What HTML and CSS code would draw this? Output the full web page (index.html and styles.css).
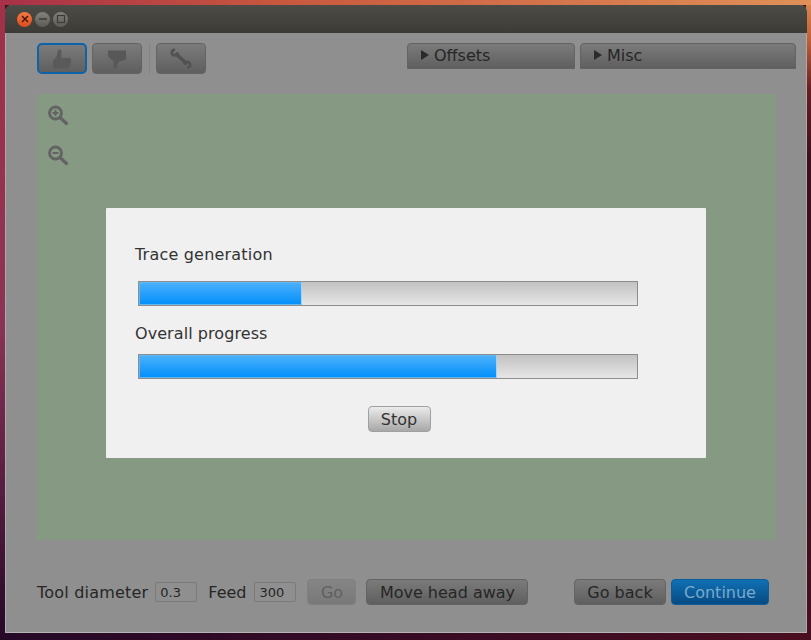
FILE: index.html
```html
<!DOCTYPE html>
<html lang="en">
<head>
  <meta charset="UTF-8">
  <title>Trace generation</title>
  <link rel="stylesheet" href="styles.css">
</head>
<body>

<div class="window">
  <div class="titlebar">
    <span class="wbtn close">
      <svg width="10" height="10" viewBox="0 0 10 10"><path d="M2 2 L8 8 M8 2 L2 8" stroke="#3a1206" stroke-width="1.4"/></svg>
    </span>
    <span class="wbtn">
      <svg width="10" height="10" viewBox="0 0 10 10"><path d="M1 5 H9" stroke="#3a3a36" stroke-width="1.4"/></svg>
    </span>
    <span class="wbtn">
      <svg width="10" height="10" viewBox="0 0 10 10"><rect x="1.5" y="1.5" width="7" height="7" fill="none" stroke="#3a3a36" stroke-width="1.2"/></svg>
    </span>
  </div>

  <div class="content">
    <div class="toolbar">
      <button class="btn tool focused">
        <svg width="22" height="22" viewBox="0 0 22 22"><path fill="#5a5a5a" d="M2 13 Q2 11.5 4 11 L6 7 L7 2 Q10.5 0.5 10.5 4 Q10.5 7 10 10 H18.5 Q20.5 10 20 12 Q20.5 14 19.5 15 Q20 17 18.5 18 Q18.5 20.5 16.5 20.5 H4 Q2 20.5 2 19 Z"/></svg>
      </button>
      <button class="btn tool">
        <svg width="22" height="22" viewBox="0 0 22 22"><path fill="#585858" d="M2 2.5 H20 V11 Q20 12 18 12 L12.5 14 L10.5 20 Q8 21.5 7.5 19 L7.5 13 Q4 11 2 8 Z"/></svg>
      </button>
      <span class="sep"></span>
      <button class="btn tool">
        <svg width="22" height="22" viewBox="0 0 22 22" fill="none" stroke="#525252">
          <path d="M5.5 5.5 L17 16" stroke-width="3.6"/>
          <path d="M5 1.8 A2.8 2.8 0 1 0 7.5 4.6" stroke-width="2.8"/>
          <path d="M17.3 19.6 A2.8 2.8 0 1 0 14.6 16.8" stroke-width="2.8"/>
        </svg>
      </button>
      <div class="spacer"></div>
      <button class="btn pane offsets"><span class="arrow"></span>Offsets</button>
      <button class="btn pane misc"><span class="arrow"></span>Misc</button>
    </div>

    <div class="canvas">
      <svg class="zoom" width="22" height="22" viewBox="0 0 22 22">
        <circle cx="8.5" cy="9" r="6" fill="none" stroke="#636363" stroke-width="2.8"/>
        <path d="M13 13.5 L19.5 19.5" stroke="#636363" stroke-width="3.2" stroke-linecap="round"/>
        <path d="M5.5 9 H11.5 M8.5 6 V12" stroke="#636363" stroke-width="2"/>
      </svg>
      <svg class="zoom" width="22" height="22" viewBox="0 0 22 22">
        <circle cx="8.5" cy="9" r="6" fill="none" stroke="#636363" stroke-width="2.8"/>
        <path d="M13 13.5 L19.5 19.5" stroke="#636363" stroke-width="3.2" stroke-linecap="round"/>
        <path d="M5.5 9 H11.5" stroke="#636363" stroke-width="2"/>
      </svg>
    </div>

    <div class="footer">
      <label class="lbl tool-label">Tool diameter</label>
      <input class="field" type="text" value="0.3">
      <label class="lbl feed">Feed</label>
      <input class="field" type="text" value="300">
      <button class="btn go" disabled>Go</button>
      <button class="btn move">Move head away</button>
      <div class="spacer"></div>
      <button class="btn back">Go back</button>
      <button class="btn continue">Continue</button>
    </div>
  </div>

  <div class="overlay">
    <div class="dialog">
      <div class="task first">Trace generation</div>
      <div class="bar"><div class="fill" style="width: 32.8%"></div></div>
      <div class="task second">Overall progress</div>
      <div class="bar"><div class="fill" style="width: 71.8%"></div></div>
      <button class="stop">Stop</button>
    </div>
  </div>
</div>

</body>
</html>
```

FILE: styles.css
```css
html, body {
  height: 100%;
}

body {
  margin: 0;
  padding: 5px 4px 7px 5px;
  box-sizing: border-box;
  overflow: hidden;
  font-family: "DejaVu Sans", sans-serif;
  background-color: #3e0f1c;
  background-image:
    linear-gradient(90deg, #a83048, #c8583e 35%, #e09058 100%),
    linear-gradient(180deg, #dd8a50 0, #c06038 40px, #6a1c22 90px, #3e0f1c 160px, #3e0f1c 500px, #4a0e20 100%),
    linear-gradient(180deg, #a33048, #8c3355 50%, #5a1f40 75%, #250828 100%),
    linear-gradient(90deg, #250828, #4a0e20);
  background-repeat: no-repeat;
  background-size: 100% 5px, 5px 100%, 5px 100%, 100% 7px;
  background-position: top, right, left, bottom;
}

.window {
  position: relative;
  height: 100%;
  display: flex;
  flex-direction: column;
  border-radius: 7px 7px 0 0;
  overflow: hidden;
  background: #8f8f8f;
}

.titlebar {
  height: 28px;
  flex: none;
  display: flex;
  align-items: center;
  padding-left: 12px;
  gap: 3px;
  background: linear-gradient(#4d4b45, #3d3b36);
  box-sizing: border-box;
}

.wbtn {
  width: 15px;
  height: 15px;
  border-radius: 50%;
  display: flex;
  align-items: center;
  justify-content: center;
  background: linear-gradient(#82817b, #5c5b56);
}

.wbtn.close {
  background: linear-gradient(#f47a42, #de4c1c);
}

.content {
  flex: 1;
  display: flex;
  flex-direction: column;
  padding: 10px 11px 28px 31px;
  min-height: 0;
  box-shadow: inset 1px 0 #aaaaaa, inset -1px 0 #aaaaaa, inset 0 -1px #b5b5b5;
}

.toolbar {
  display: flex;
  align-items: flex-start;
  height: 31px;
  padding-left: 1px;
}

.spacer {
  flex: 1;
}

.btn {
  box-sizing: border-box;
  height: 31px;
  padding: 0;
  margin: 0;
  font-family: inherit;
  font-size: 16px;
  color: #262626;
  border: 1px solid #636363;
  border-radius: 4px;
  background: linear-gradient(#7b7b7b, #5f5f5f);
  display: flex;
  align-items: center;
  justify-content: center;
}

.tool {
  width: 50px;
  margin-right: 5px;
}

.tool.focused {
  border: 2px solid #0d63a8;
  border-radius: 5px;
}

.sep {
  width: 1px;
  height: 31px;
  margin: 0 6px 0 2px;
  background: #848484;
}

.pane {
  height: 26px;
  justify-content: flex-start;
  padding: 0 0 2px 13px;
  border-radius: 4px 4px 0 0;
}

.offsets {
  width: 168px;
}

.misc {
  width: 216px;
  margin-left: 5px;
}

.arrow {
  width: 0;
  height: 0;
  border-left: 8px solid #2a2a2a;
  border-top: 5px solid transparent;
  border-bottom: 5px solid transparent;
  margin-right: 5px;
}

.canvas {
  margin-top: 20px;
  height: 446px;
  flex: none;
  width: 740px;
  background: #859983;
  display: flex;
  flex-direction: column;
  align-items: flex-start;
  padding: 10px 0 0 11px;
  box-sizing: border-box;
  gap: 18px;
}

.footer {
  margin-top: 39px;
  display: flex;
  align-items: center;
  height: 26px;
  padding: 0 27px 0 1px;
}

.lbl {
  font-size: 16px;
  color: #262626;
}

.tool-label {
  letter-spacing: 0.2px;
  margin-right: 7px;
}

.feed {
  margin: 0 8px 0 11px;
}

.field {
  box-sizing: border-box;
  width: 42px;
  height: 20px;
  padding: 0 0 0 4px;
  border: 1px solid #7b7b7b;
  border-radius: 2px;
  background: #8f8f8f;
  font-family: inherit;
  font-size: 13px;
  color: #262626;
}

.go {
  width: 49px;
  height: 26px;
  margin-left: 11px;
  border-color: #7f7f7f;
  background: linear-gradient(#858585, #797979);
  color: #606060;
}

.move {
  width: 162px;
  height: 26px;
  margin-left: 10px;
}

.back {
  width: 92px;
  height: 26px;
}

.continue {
  width: 98px;
  height: 26px;
  margin-left: 5px;
  color: #79a9cc;
  border-color: #0d5c9c;
  background: linear-gradient(#1070b4, #064a82);
}

.overlay {
  position: absolute;
  left: 0;
  right: 0;
  top: 28px;
  bottom: 0;
  display: flex;
  align-items: center;
  justify-content: center;
}

.dialog {
  box-sizing: border-box;
  width: 600px;
  height: 250px;
  padding: 37px 68px 0 29px;
  background: #f0f0f0;
  border-radius: 1px;
  color: #333;
  display: flex;
  flex-direction: column;
}

.task {
  font-size: 16px;
  line-height: 20px;
}

.first {
  letter-spacing: 0.2px;
}

.second {
  margin-top: 18px;
  letter-spacing: 0.07px;
}

.bar {
  box-sizing: border-box;
  width: 500px;
  height: 25px;
  margin: 16px 0 0 3px;
  border: 1px solid #8d8d8d;
  background: linear-gradient(#c2c2c2, #e6e6e6);
}

.second + .bar {
  margin-top: 10px;
}

.fill {
  box-sizing: border-box;
  height: 100%;
  border: 1px solid #62b6f2;
  border-right-color: #a8d4f0;
  background: linear-gradient(#4ab0fb, #0490fb);
}

.stop {
  box-sizing: border-box;
  align-self: center;
  width: 63px;
  height: 26px;
  margin: 27px 0 0 25px;
  padding: 0;
  font-family: inherit;
  font-size: 16px;
  color: #333;
  border: 1px solid #a0a0a0;
  border-radius: 4px;
  background: linear-gradient(#ebebeb, #a8a8a8);
}
```
